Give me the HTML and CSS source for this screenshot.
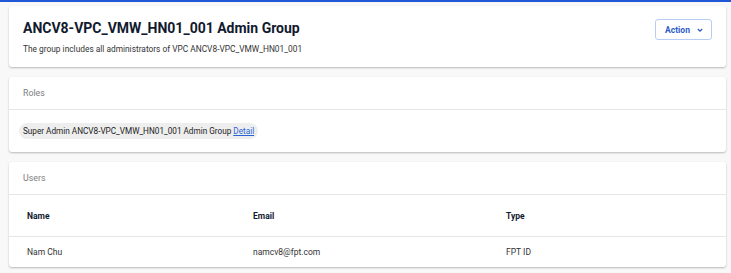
FILE: index.html
```html
<!DOCTYPE html>
<html lang="en">
<head>
    <meta charset="UTF-8">
    <meta name="viewport" content="width=device-width, initial-scale=1.0">
    <title>ANCV8-VPC_VMW_HN01_001 Admin Group</title>
    <link rel="stylesheet" href="styles.css">
</head>
<body>
    <div class="page">
        <div class="card group-head">
            <div>
                <h1>ANCV8-VPC_VMW_HN01_001 Admin Group</h1>
                <p class="desc">The group includes all administrators of VPC ANCV8-VPC_VMW_HN01_001</p>
            </div>
            <button class="action-btn">Action
                <svg width="8" height="8" viewBox="0 0 8 8"><path d="M1.8 3 L4 5.1 L6.2 3" fill="none" stroke="currentColor" stroke-width="1.3"/></svg>
            </button>
        </div>

        <div class="card">
            <div class="card-title">Roles</div>
            <div class="card-body">
                <span class="chip">Super Admin ANCV8-VPC_VMW_HN01_001 Admin Group&nbsp;<a href="#">Detail</a></span>
            </div>
        </div>

        <div class="card">
            <div class="card-title">Users</div>
            <table class="users">
                <thead>
                    <tr><th>Name</th><th>Email</th><th>Type</th></tr>
                </thead>
                <tbody>
                    <tr><td>Nam Chu</td><td>namcv8@fpt.com</td><td>FPT ID</td></tr>
                </tbody>
            </table>
        </div>
    </div>
</body>
</html>
```

FILE: styles.css
```css
body {
    margin: 0;
    background: #f8f8f8;
    font-family: Roboto, "Liberation Sans", sans-serif;
    color: #222;
    border-top: 2px solid #1f57d6;
    height: 271px;
    overflow: hidden;
}
.page {
    padding: 4px 5px 0 9px;
    display: flex;
    flex-direction: column;
    gap: 10px;
}
.card {
    background: #fff;
    border-radius: 3px;
    box-shadow: 0 1px 2px rgba(0, 0, 0, 0.25);
}
.group-head {
    display: flex;
    justify-content: space-between;
    align-items: flex-start;
    padding: 13px 14px 15px 14px;
    height: 33px;
}
h1 {
    margin: 0;
    font-size: 14px;
    font-weight: 700;
    color: #111a2e;
    line-height: 19px;
}
.desc {
    margin: 6px 0 0;
    font-size: 8.35px;
    color: #333;
}
.action-btn {
    height: 21px;
    width: 57px;
    border: 1px solid #b7cdf4;
    border-radius: 3px;
    background: #fff;
    color: #2c5cc9;
    font-family: inherit;
    font-size: 8.5px;
    font-weight: 700;
    display: flex;
    align-items: center;
    justify-content: center;
    gap: 6px;
    padding: 0 0 0 2px;
}
.card-title {
    padding: 0 14px;
    height: 32px;
    line-height: 32px;
    font-size: 8.8px;
    color: #7e7e7e;
    border-bottom: 1px solid #e6e6e6;
}
.card-body {
    display: flex;
    padding: 13px 10px;
}
.chip {
    display: block;
    background: #eeeeee;
    border-radius: 8px;
    padding: 3px 4px;
    font-size: 8.2px;
    line-height: 10px;
    color: #222;
}
.chip a {
    color: #2b63d6;
}
.users {
    width: 100%;
    border-collapse: collapse;
    font-size: 8.5px;
}
.users th, .users td {
    text-align: left;
    padding: 0 18px;
    height: 41px;
}
.users th {
    font-weight: 700;
    color: #111a2e;
    border-bottom: 1px solid #e6e6e6;
}
.users td {
    height: 30px;
    color: #333;
}
.users th:nth-child(1) { width: 190px; }
.users th:nth-child(2) { width: 217px; }
```
